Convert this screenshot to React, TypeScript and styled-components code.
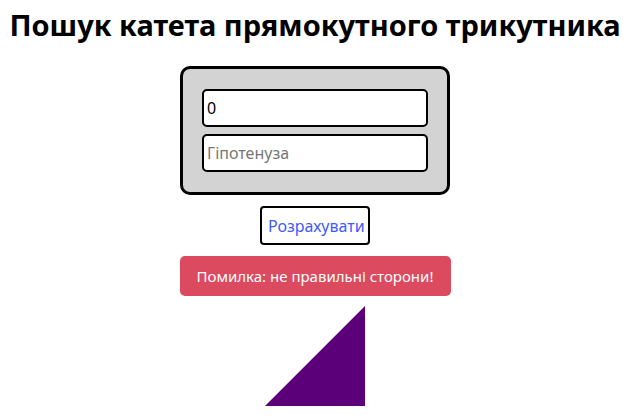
import React, { FC, useState } from 'react';
import styled, { createGlobalStyle } from 'styled-components';

const GlobalStyle = createGlobalStyle`
  body {
    margin: 0;
    background: #ffffff;
    font-family: 'Noto Sans', 'Liberation Sans', sans-serif;
  }
`;

const Page = styled.div`
  width: 630px;
  display: flex;
  flex-direction: column;
  align-items: center;
`;

const Title = styled.h1`
  margin: 0;
  padding-top: 5px;
  font-size: 29px;
  line-height: 39px;
  font-weight: 700;
  color: #000;
  white-space: nowrap;
`;

const FormBox = styled.div`
  box-sizing: border-box;
  margin-top: 22px;
  width: 270px;
  padding: 20px 19px;
  display: flex;
  flex-direction: column;
  gap: 7px;
  background: #d3d3d3;
  border: 3px solid #000;
  border-radius: 10px;
`;

const Field = styled.input`
  box-sizing: border-box;
  width: 100%;
  height: 38px;
  padding: 1px 3px;
  border: 2px solid #000;
  border-radius: 5px;
  background: #fff;
  font-family: 'Noto Sans', 'Liberation Sans', sans-serif;
  font-size: 16px;
  color: #000;
  outline: none;
  &::placeholder {
    color: #777;
  }
`;

const CalcButton = styled.button`
  box-sizing: border-box;
  margin-top: 11px;
  width: 110px;
  height: 39px;
  border: 2px solid #000;
  border-radius: 4px;
  background: #fff;
  color: #3d5afe;
  font-family: 'Noto Sans', 'Liberation Sans', sans-serif;
  font-size: 16px;
  cursor: pointer;
`;

const ErrorBox = styled.div`
  box-sizing: border-box;
  margin-top: 11px;
  width: 271px;
  height: 40px;
  display: flex;
  align-items: center;
  justify-content: center;
  background: #dc4a5f;
  border-radius: 5px;
  color: #fff;
  font-size: 15px;
`;

const Triangle = styled.div<{ $size: number }>`
  margin-top: 10px;
  width: 0;
  height: 0;
  border-left: ${(p) => p.$size}px solid transparent;
  border-bottom: ${(p) => p.$size}px solid #5c007a;
`;

const App: FC = () => {
  const [leg, setLeg] = useState('0');
  const [hyp, setHyp] = useState('');

  return (
    <Page>
      <GlobalStyle />
      <Title>Пошук катета прямокутного трикутника</Title>
      <FormBox>
        <Field value={leg} onChange={(e) => setLeg(e.target.value)} />
        <Field placeholder="Гіпотенуза" value={hyp} onChange={(e) => setHyp(e.target.value)} />
      </FormBox>
      <CalcButton>Розрахувати</CalcButton>
      <ErrorBox>Помилка: не правильні сторони!</ErrorBox>
      <Triangle $size={100} />
    </Page>
  );
};

export default App;
